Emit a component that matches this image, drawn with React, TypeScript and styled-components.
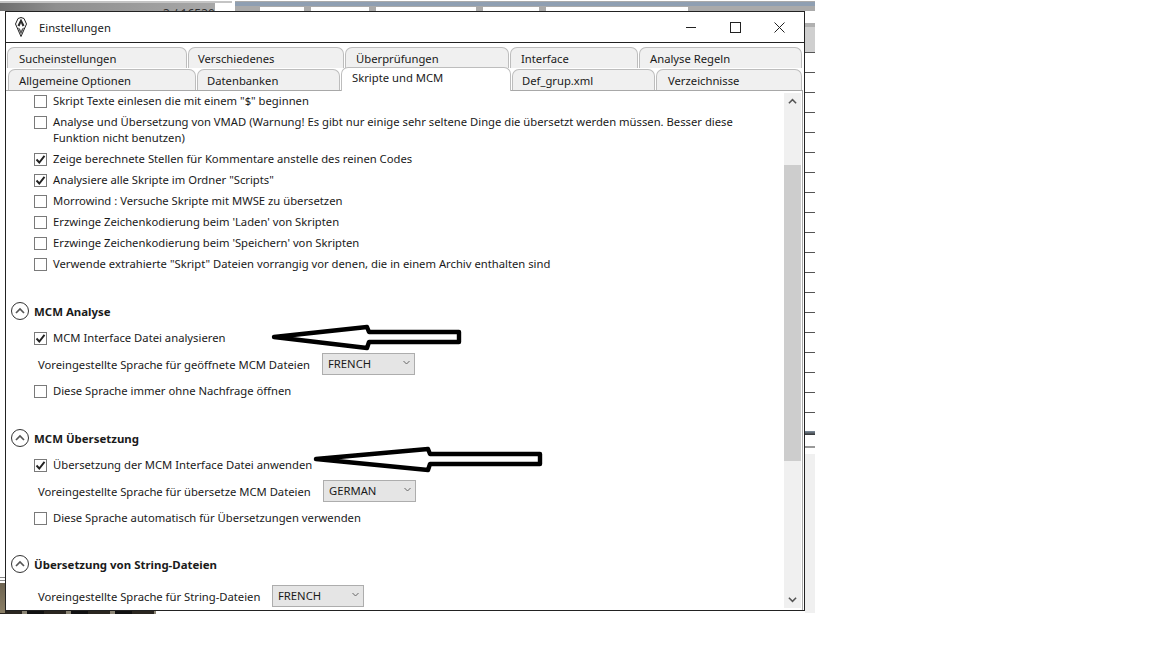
import React from 'react';
import styled, { createGlobalStyle } from 'styled-components';

const GlobalStyle = createGlobalStyle`
  html, body {
    margin: 0;
    background: #fff;
  }
  body {
    font-family: "Noto Sans", "Liberation Sans", sans-serif;
    font-size: 11.25px;
    color: #1a1a1a;
  }
`;

const backTabs = [
  { label: 'Sucheinstellungen', width: 180, pad: 11 },
  { label: 'Verschiedenes', width: 156, pad: 9 },
  { label: 'Überprüfungen', width: 164, pad: 10 },
  { label: 'Interface', width: 128, pad: 10 },
  { label: 'Analyse Regeln', width: 163, pad: 10 },
];

const frontTabs = [
  { label: 'Allgemeine Optionen', width: 188, pad: 10 },
  { label: 'Datenbanken', width: 143, pad: 9 },
  { label: 'Skripte und MCM', width: 170, pad: 10, active: true },
  { label: 'Def_grup.xml', width: 143, pad: 9 },
  { label: 'Verzeichnisse', width: 146, pad: 11 },
];

function Chevron({ size = 9 }: { size?: number }) {
  return (
    <svg width={size} height={size} viewBox="0 0 10 10">
      <path d="M1 7 L5 3 L9 7" fill="none" stroke="#555" strokeWidth="1.7" />
    </svg>
  );
}

function Logo() {
  return (
    <svg width="12" height="20" viewBox="0 0 12 20">
      <path d="M6 0.5 L9 1.5 L11.5 7 L6 19.5 L0.5 7 L3 1.5 Z" fill="#fff" stroke="#222" strokeWidth="1" />
      <path d="M6 1.5 L2.5 8.5 L4.5 9.5 L6 6 L7.5 9.5 L9.5 8.5 Z" fill="#2c2c2c" />
      <path d="M2.8 10.5 L6 17.5 L9.2 10.5 L7.2 11.5 L6 14 L4.8 11.5 Z" fill="#555" />
    </svg>
  );
}

function Check({ label, checked, lines }: { label: React.ReactNode; checked?: boolean; lines?: boolean }) {
  return (
    <S.CheckRow $tall={lines}>
      <S.Box>
        {checked && (
          <svg width="11" height="11" viewBox="0 0 11 11">
            <path d="M1.5 5.5 L4.3 8.5 L9.5 1.8" fill="none" stroke="#222" strokeWidth="1.9" />
          </svg>
        )}
      </S.Box>
      <S.CheckLabel>{label}</S.CheckLabel>
    </S.CheckRow>
  );
}

function Section({ title, gap }: { title: string; gap: number }) {
  return (
    <S.SectionHead $gap={gap}>
      <S.Collapse>
        <Chevron size={10} />
      </S.Collapse>
      <S.SectionTitle>{title}</S.SectionTitle>
    </S.SectionHead>
  );
}

function Combo({ label, value, width, labelWidth }: { label: string; value: string; width: number; labelWidth: number }) {
  return (
    <S.ComboRow>
      <S.ComboLabel $width={labelWidth}>{label}</S.ComboLabel>
      <S.Combo $width={width}>
        {value}
        <S.ComboArrow>
          <svg width="7" height="5" viewBox="0 0 7 5">
            <path d="M0.5 1 L3.5 4 L6.5 1" fill="none" stroke="#666" strokeWidth="1" />
          </svg>
        </S.ComboArrow>
      </S.Combo>
    </S.ComboRow>
  );
}

function HandArrow({ top, left, length, barb }: { top: number; left: number; length: number; barb: number }) {
  return (
    <S.ArrowSvg $top={top} $left={left} width={length + 6} height="28" viewBox={`0 0 ${length + 6} 28`}>
      <path
        d={`M3 13 L${barb} 3 L${barb + 2} 8 L${length + 2} 8 L${length + 2} 18 L${barb + 2} 18 L${barb} 24 Z`}
        fill="#fff"
        stroke="#000"
        strokeWidth="4.4"
        strokeLinejoin="round"
      />
    </S.ArrowSvg>
  );
}

function App() {
  return (
    <S.Desk>
      <GlobalStyle />
      <S.BackTop />
      <S.BackCells>
        <S.BackCell $width={44} />
        <S.BackCell $width={58} />
        <S.BackCell $width={100} />
        <S.BackCell $width={56} />
        <S.BackCell $width={142} />
      </S.BackCells>
      <S.BackCounter>3 / 16530</S.BackCounter>
      <S.BackRight />
      <S.BackPhoto />
      <S.BackLeftPhoto />

      <S.Dialog>
        <S.TitleBar>
          <S.LogoSlot>
            <Logo />
          </S.LogoSlot>
          <S.Title>Einstellungen</S.Title>
          <S.Controls>
            <S.Control>
              <svg width="10" height="10" viewBox="0 0 10 10">
                <path d="M0 5.5 H10" stroke="#222" strokeWidth="1" />
              </svg>
            </S.Control>
            <S.Control>
              <svg width="11" height="11" viewBox="0 0 11 11">
                <rect x="0.5" y="0.5" width="10" height="10" fill="none" stroke="#222" strokeWidth="1" />
              </svg>
            </S.Control>
            <S.Control>
              <svg width="11" height="11" viewBox="0 0 11 11">
                <path d="M0.5 0.5 L10.5 10.5 M10.5 0.5 L0.5 10.5" stroke="#222" strokeWidth="1" />
              </svg>
            </S.Control>
          </S.Controls>
        </S.TitleBar>

        <S.TabArea>
          <S.TabRow $left={1}>
            {backTabs.map((t) => (
              <S.Tab key={t.label} $width={t.width} $pad={t.pad}>
                {t.label}
              </S.Tab>
            ))}
          </S.TabRow>
          <S.TabRow $left={2}>
            {frontTabs.map((t) => (
              <S.Tab key={t.label} $width={t.width} $pad={t.pad} $active={t.active}>
                {t.label}
              </S.Tab>
            ))}
          </S.TabRow>
        </S.TabArea>

        <S.Panel>
          <S.Content>
            <Check label={'Skript Texte einlesen die mit einem "$" beginnen'} />
            <Check
              lines
              label="Analyse und Übersetzung von VMAD (Warnung! Es gibt nur einige sehr seltene Dinge die übersetzt werden müssen. Besser diese Funktion nicht benutzen)"
            />
            <Check checked label="Zeige berechnete Stellen für Kommentare anstelle des reinen Codes" />
            <Check checked label={'Analysiere alle Skripte im Ordner "Scripts"'} />
            <Check label="Morrowind : Versuche Skripte mit MWSE zu übersetzen" />
            <Check label="Erzwinge Zeichenkodierung beim 'Laden' von Skripten" />
            <Check label="Erzwinge Zeichenkodierung beim 'Speichern' von Skripten" />
            <Check label={'Verwende extrahierte "Skript" Dateien vorrangig vor denen, die in einem Archiv enthalten sind'} />

            <Section title="MCM Analyse" gap={26} />
            <Check checked label="MCM Interface Datei analysieren" />
            <Combo label="Voreingestellte Sprache für geöffnete MCM Dateien" value="FRENCH" width={93} labelWidth={284} />
            <Check label="Diese Sprache immer ohne Nachfrage öffnen" />

            <Section title="MCM Übersetzung" gap={26} />
            <Check checked label="Übersetzung der MCM Interface Datei anwenden" />
            <Combo label="Voreingestellte Sprache für übersetze MCM Dateien" value="GERMAN" width={93} labelWidth={285} />
            <Check label="Diese Sprache automatisch für Übersetzungen verwenden" />

            <Section title="Übersetzung von String-Dateien" gap={25} />
            <Combo label="Voreingestellte Sprache für String-Dateien" value="FRENCH" width={92} labelWidth={234} />

            <HandArrow top={233} left={265} length={186} barb={96} />
            <HandArrow top={355} left={307} length={225} barb={115} />
          </S.Content>
          <S.Scrollbar>
            <S.ScrollButton>
              <Chevron />
            </S.ScrollButton>
            <S.ScrollTrack>
              <S.ScrollThumb />
            </S.ScrollTrack>
            <S.ScrollButton $down>
              <Chevron />
            </S.ScrollButton>
          </S.Scrollbar>
        </S.Panel>
      </S.Dialog>
    </S.Desk>
  );
}

const S = {
  Desk: styled.div`
    position: relative;
    width: 1152px;
    height: 648px;
    overflow: hidden;
    background: #fff;
  `,
  BackTop: styled.div`
    position: absolute;
    left: 0;
    top: 1px;
    width: 815px;
    height: 10px;
    background:
      linear-gradient(#8f9fb2, #8f9fb2) 235px 1px / 580px 4px no-repeat,
      linear-gradient(90deg, #6f6f6f, #8e8e8e 26%, #a8a8a8) 0 2px / 215px 8px no-repeat,
      linear-gradient(#c4c4c4, #c4c4c4) 0 0 / 232px 2px no-repeat,
      linear-gradient(#aaa, #aaa) 235px 0 / 580px 10px no-repeat;
  `,
  BackCells: styled.div`
    position: absolute;
    left: 260px;
    top: 7px;
    display: flex;
    gap: 7px;
  `,
  BackCell: styled.div<{ $width: number }>`
    width: ${(p) => p.$width}px;
    height: 4px;
    background: #fff;
  `,
  BackCounter: styled.div`
    position: absolute;
    left: 163px;
    top: 8px;
    font-size: 12px;
    line-height: 12px;
    color: #333;
  `,
  BackRight: styled.div`
    position: absolute;
    left: 805px;
    top: 23px;
    width: 10px;
    height: 590px;
    background:
      linear-gradient(#b0b0b0, #b0b0b0) 0 0 / 10px 4px no-repeat,
      linear-gradient(#cfcfcf, #cfcfcf) 0 4px / 10px 25px no-repeat,
      linear-gradient(#f0f0f0, #f0f0f0) 0 431px / 10px 159px no-repeat,
      linear-gradient(#7f8f9f, #333) 0 408px / 10px 4px no-repeat,
      linear-gradient(#999, #999) 0 423px / 10px 2px no-repeat,
      repeating-linear-gradient(#fff 0, #fff 19px, #555 19px, #555 20px) 0 10px / 10px 390px no-repeat;
  `,
  BackPhoto: styled.div`
    position: absolute;
    left: 0;
    top: 611px;
    width: 156px;
    height: 3px;
    background: repeating-linear-gradient(90deg, #2a2620 0, #2a2620 22px, #8a8474 22px, #8a8474 27px, #111 27px, #111 44px);
  `,
  BackLeftPhoto: styled.div`
    position: absolute;
    left: 0;
    top: 577px;
    width: 5px;
    height: 36px;
    background:
      linear-gradient(#888, #888) 0 0 / 5px 1px no-repeat,
      linear-gradient(#888, #888) 0 3px / 5px 1px no-repeat,
      linear-gradient(#6d6350, #8a7f66) 0 6px / 5px 30px no-repeat,
      #fff;
  `,
  Dialog: styled.div`
    position: absolute;
    left: 5px;
    top: 11px;
    box-sizing: border-box;
    width: 800px;
    height: 600px;
    display: flex;
    flex-direction: column;
    background: #fff;
    border: 1px solid #222;
  `,
  TitleBar: styled.div`
    box-sizing: border-box;
    height: 31px;
    flex: none;
    display: flex;
    align-items: center;
    border-bottom: 1px solid #222;
  `,
  LogoSlot: styled.div`
    display: flex;
    margin-left: 9px;
  `,
  Title: styled.div`
    margin-left: 12px;
  `,
  Controls: styled.div`
    margin-left: auto;
    display: flex;
    margin-right: 3px;
  `,
  Control: styled.div`
    width: 44px;
    height: 30px;
    display: flex;
    align-items: center;
    justify-content: center;
  `,
  TabArea: styled.div`
    flex: none;
    height: 47px;
    padding-top: 4px;
    box-sizing: border-box;
    display: flex;
    flex-direction: column;
    gap: 1px;
  `,
  TabRow: styled.div<{ $left: number }>`
    display: flex;
    gap: 1px;
    height: 21px;
    padding-left: ${(p) => p.$left}px;
  `,
  Tab: styled.div<{ $width: number; $pad: number; $active?: boolean }>`
    box-sizing: border-box;
    width: ${(p) => p.$width}px;
    padding-left: ${(p) => p.$pad}px;
    padding-top: ${(p) => (p.$active ? '1px' : '2px')};
    height: ${(p) => (p.$active ? '24px' : '21px')};
    margin-top: ${(p) => (p.$active ? '-2px' : '0')};
    background: ${(p) => (p.$active ? '#fff' : '#f0f0f0')};
    border: 1px solid #bdbdbd;
    border-bottom: none;
    border-radius: 7px 7px 0 0;
    line-height: 17px;
    white-space: nowrap;
    position: relative;
  `,
  Panel: styled.div`
    flex: 1;
    min-height: 0;
    display: flex;
    border-top: 1px solid #a8a8a8;
    border-right: 1px solid #a8a8a8;
    margin-right: 1px;
  `,
  Content: styled.div`
    position: relative;
    flex: 1;
    min-width: 0;
    overflow: hidden;
    padding-left: 5px;
    margin-bottom: 2px;
    box-sizing: border-box;
  `,
  CheckRow: styled.div<{ $tall?: boolean }>`
    display: flex;
    align-items: flex-start;
    min-height: ${(p) => (p.$tall ? '37px' : '21px')};
    padding-left: 23px;
    padding-right: 50px;
  `,
  Box: styled.div`
    box-sizing: border-box;
    flex: none;
    width: 13px;
    height: 13px;
    margin-top: 4px;
    border: 1px solid #7a7a7a;
    background: #fff;
    display: flex;
    align-items: center;
    justify-content: center;
  `,
  CheckLabel: styled.div`
    margin-left: 6px;
    line-height: 16px;
    margin-top: 2px;
  `,
  SectionHead: styled.div<{ $gap: number }>`
    display: flex;
    align-items: center;
    height: 20px;
    margin-top: ${(p) => p.$gap}px;
    margin-bottom: 7px;
  `,
  Collapse: styled.div`
    box-sizing: border-box;
    width: 18px;
    height: 18px;
    border: 1px solid #333;
    border-radius: 50%;
    display: flex;
    align-items: center;
    justify-content: center;
    margin-right: 5px;
  `,
  SectionTitle: styled.div`
    font-weight: 700;
    font-size: 11.45px;
  `,
  ComboRow: styled.div`
    box-sizing: border-box;
    display: flex;
    align-items: center;
    height: 32px;
    padding-left: 27px;
    padding-bottom: 2px;
  `,
  ComboLabel: styled.span<{ $width: number }>`
    flex: none;
    width: ${(p) => p.$width}px;
    white-space: nowrap;
  `,
  Combo: styled.div<{ $width: number }>`
    position: relative;
    flex: none;
    box-sizing: border-box;
    width: ${(p) => p.$width}px;
    height: 22px;
    padding-left: 5px;
    line-height: 20px;
    background: #e5e5e5;
    border: 1px solid #adadad;
  `,
  ComboArrow: styled.span`
    position: absolute;
    right: 4px;
    top: 2px;
    line-height: 10px;
  `,
  ArrowSvg: styled.svg<{ $top: number; $left: number }>`
    position: absolute;
    top: ${(p) => p.$top}px;
    left: ${(p) => p.$left}px;
  `,
  Scrollbar: styled.div`
    flex: none;
    width: 17px;
    margin: 2px 1px 2px 0;
    display: flex;
    flex-direction: column;
    background: #f0f0f0;
  `,
  ScrollButton: styled.div<{ $down?: boolean }>`
    flex: none;
    height: 17px;
    display: flex;
    align-items: center;
    justify-content: center;
    transform: ${(p) => (p.$down ? 'rotate(180deg)' : 'none')};
  `,
  ScrollTrack: styled.div`
    flex: 1;
    padding-top: 55px;
  `,
  ScrollThumb: styled.div`
    height: 296px;
    background: #cdcdcd;
  `,
};

export default App;
